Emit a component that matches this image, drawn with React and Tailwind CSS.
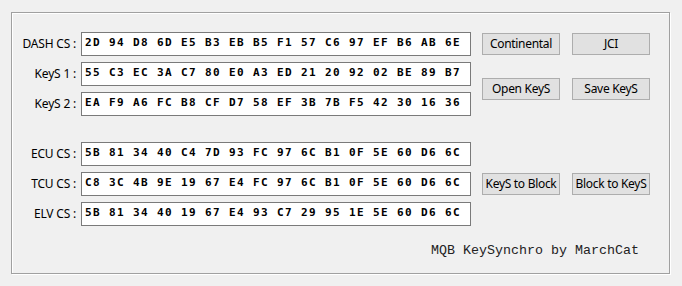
const topRows = [
  ["DASH CS :", "2D 94 D8 6D E5 B3 EB B5 F1 57 C6 97 EF B6 AB 6E"],
  ["KeyS 1 :", "55 C3 EC 3A C7 80 E0 A3 ED 21 20 92 02 BE 89 B7"],
  ["KeyS 2 :", "EA F9 A6 FC B8 CF D7 58 EF 3B 7B F5 42 30 16 36"],
];

const bottomRows = [
  ["ECU CS :", "5B 81 34 40 C4 7D 93 FC 97 6C B1 0F 5E 60 D6 6C"],
  ["TCU CS :", "C8 3C 4B 9E 19 67 E4 FC 97 6C B1 0F 5E 60 D6 6C"],
  ["ELV CS :", "5B 81 34 40 19 67 E4 93 C7 29 95 1E 5E 60 D6 6C"],
];

function Field({ label, value }) {
  return (
    <div className="flex items-center h-[24px]">
      <div className="w-[65px] pr-[1px] text-right text-[12px] tracking-[-0.2px] text-black whitespace-nowrap">{label}</div>
      <div className="ml-[4px] w-[390px] h-[24px] bg-white border border-[#7a7a7a] flex items-center pl-[3px] pb-[2px] font-['DejaVu_Sans_Mono',monospace] font-bold text-[11px] tracking-[1.38px] text-black whitespace-nowrap">
        {value}
      </div>
    </div>
  );
}

function Btn({ children }) {
  return (
    <button className="w-[78px] h-[22px] bg-[#e1e1e1] border border-[#adadad] text-[12px] tracking-[-0.3px] text-black flex items-center justify-center whitespace-nowrap">
      {children}
    </button>
  );
}

export default function App() {
  return (
    <div className="w-[682px] h-[286px] bg-[#f0f0f0] pt-[12px] pl-[11px] font-['Noto_Sans',sans-serif]">
      <div className="w-[659px] h-[262px] border border-[#a0a0a0] shadow-[inset_1px_1px_0_#fff,1px_1px_0_#fff] pt-[19px]">
        {/* top group */}
        <div className="flex">
          <div className="flex flex-col gap-[6px]">
            {topRows.map(([l, v]) => <Field key={l} label={l} value={v} />)}
          </div>
          <div className="ml-[11px] pt-[1px] flex flex-col">
            <div className="flex gap-[12px]">
              <Btn>Continental</Btn>
              <Btn>JCI</Btn>
            </div>
            <div className="flex gap-[12px] mt-[23px]">
              <Btn>Open KeyS</Btn>
              <Btn>Save KeyS</Btn>
            </div>
          </div>
        </div>

        {/* bottom group */}
        <div className="flex mt-[26px]">
          <div className="flex flex-col gap-[6px]">
            {bottomRows.map(([l, v]) => <Field key={l} label={l} value={v} />)}
          </div>
          <div className="ml-[11px] pt-[31px]">
            <div className="flex gap-[12px]">
              <Btn>KeyS to Block</Btn>
              <Btn>Block to KeyS</Btn>
            </div>
          </div>
        </div>

        <div className="mt-[17px] pr-[30px] text-right font-['Liberation_Mono',monospace] text-[13.33px] leading-[16px] text-[#222]">
          MQB KeySynchro by MarchCat
        </div>
      </div>
    </div>
  );
}
